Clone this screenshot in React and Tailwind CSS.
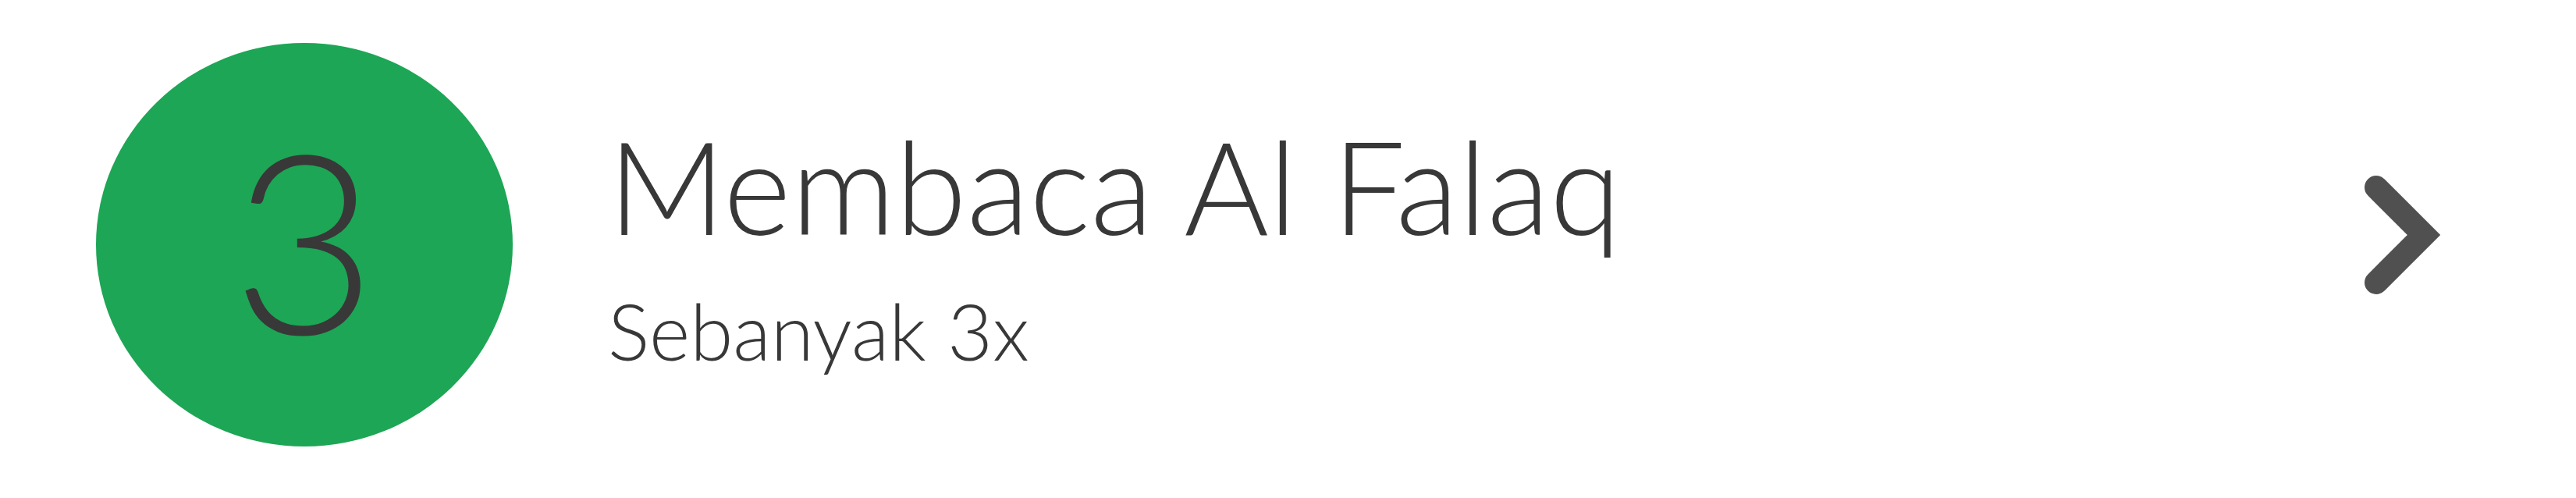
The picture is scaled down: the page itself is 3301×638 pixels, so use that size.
export default function App() {
  return (
    <div className="w-full h-[638px] bg-white flex items-center pl-[123px] pr-[171px] pb-[11px] font-['Lato','Liberation_Sans',sans-serif] text-[#383838]">
      {/* Step number */}
      <div className="w-[534px] h-[517px] shrink-0 rounded-[50%] bg-[#1da655] flex items-center justify-center pb-[20px]">
        <span className="text-[321px] leading-none font-light">3</span>
      </div>

      {/* Title */}
      <div className="ml-[122px] flex flex-col">
        <h1 className="text-[166px] leading-none font-light whitespace-nowrap">
          Membaca Al Falaq
        </h1>
        <p className="mt-[53px] text-[100px] leading-none font-light whitespace-nowrap">
          Sebanyak 3x
        </p>
      </div>

      {/* Chevron */}
      <svg
        viewBox="0 0 100 160"
        width="100"
        height="160"
        className="ml-auto mb-[25px] shrink-0"
      >
        <polyline
          points="15,19 76,80 15,141"
          fill="none"
          stroke="#505050"
          strokeWidth="30"
          strokeLinecap="round"
          strokeLinejoin="miter"
        />
      </svg>
    </div>
  );
}
